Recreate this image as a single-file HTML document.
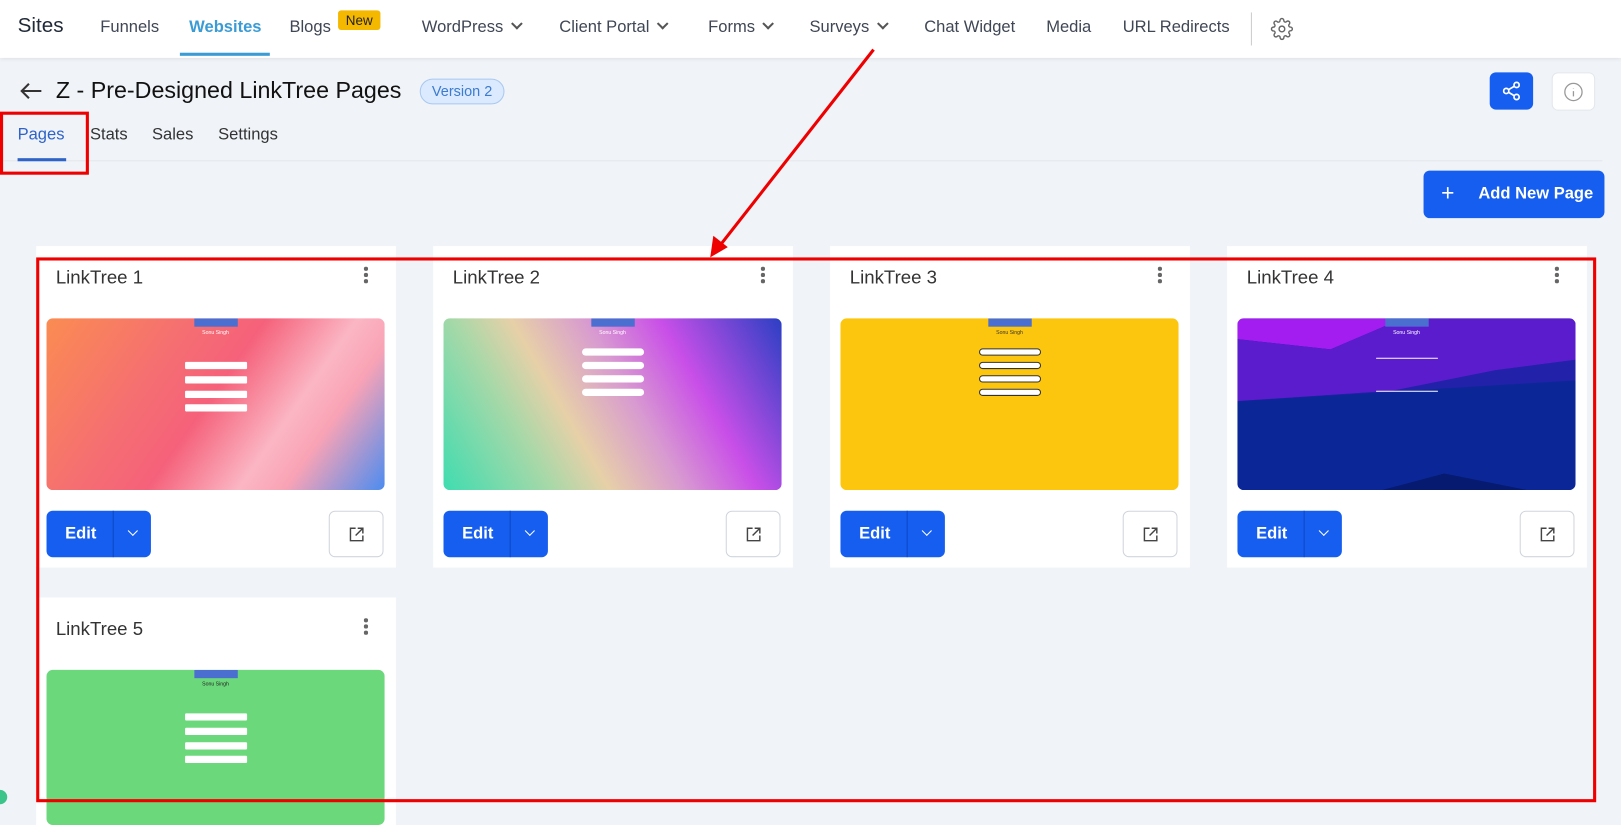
<!DOCTYPE html>
<html><head><meta charset="utf-8"><style>
*{box-sizing:border-box;margin:0;padding:0}
html,body{width:1621px;height:808px;overflow:hidden;background:#f0f4f8;font-family:"Liberation Sans",sans-serif}
#w{position:absolute;left:0;top:0;width:1568px;height:782px;transform:scale(1.0338);transform-origin:0 0}
.a{position:absolute}
.nav{left:0;top:0;width:1568px;height:56px;background:#fff;box-shadow:0 1px 4px rgba(0,0,0,.08)}
.ni{position:absolute;top:18px;font-size:16px;color:#3f4654;white-space:nowrap}
.chev{display:inline-block;width:8px;height:8px;border-right:2px solid #555;border-bottom:2px solid #555;transform:rotate(45deg);margin-left:9px;position:relative;top:-4px}
.card{position:absolute;width:348px;height:311px;background:#fff}
.card .t{position:absolute;left:19px;top:20px;font-size:18px;color:#333}
.card .k{position:absolute;left:317px;top:20px;width:4px}
.card .k i{display:block;width:3.5px;height:3.5px;border-radius:50%;background:#666;margin-bottom:2.5px}
.th{position:absolute;left:10px;top:70px;width:327px;height:166px;border-radius:6px;overflow:hidden}
.edit{position:absolute;left:10px;top:256px;width:101px;height:45px;background:#155eef;border-radius:6px;color:#fff;font-weight:bold;font-size:16px}
.edit span{position:absolute;left:18px;top:14px}
.edit b{position:absolute;left:64px;top:0;width:1px;height:45px;background:#0d47c4}
.edit em{position:absolute;left:80px;top:16px;width:7px;height:7px;border-right:1.5px solid #fff;border-bottom:1.5px solid #fff;transform:rotate(45deg)}
.ext{position:absolute;left:283px;top:256px;width:53px;height:45px;border:1px solid #d0d5dd;border-radius:6px;background:#fff}
.lg{position:absolute;left:50%;top:0;width:42px;height:8px;margin-left:-21px;background:#4a6fd0}
.nm{position:absolute;left:0;right:0;top:11px;text-align:center;font-size:5px;color:#fff}
.bt{position:absolute;left:50%;width:60px;height:7px;margin-left:-30px;background:#fff;border-radius:1px}
.bt.r{border-radius:5px}
</style></head><body><div id="w">
<div class="a nav">
<div class="ni" style="left:17px;top:14px;font-size:20px;color:#1f2937">Sites</div>
<div class="ni" style="left:97px">Funnels</div>
<div class="ni" style="left:183px;color:#3a9bd5;font-weight:bold">Websites</div>
<div class="a" style="left:174px;top:51px;width:87px;height:3px;background:#3a9bd5"></div>
<div class="ni" style="left:280px">Blogs</div>
<div class="a" style="left:327px;top:10px;width:41px;height:19px;background:#f5b800;border-radius:3px;font-size:13px;color:#222;text-align:center;line-height:19px">New</div>
<div class="ni" style="left:408px">WordPress<span class="chev"></span></div>
<div class="ni" style="left:541px">Client Portal<span class="chev"></span></div>
<div class="ni" style="left:685px">Forms<span class="chev"></span></div>
<div class="ni" style="left:783px">Surveys<span class="chev"></span></div>
<div class="ni" style="left:894px">Chat Widget</div>
<div class="ni" style="left:1012px">Media</div>
<div class="ni" style="left:1086px">URL Redirects</div>
<div class="a" style="left:1210px;top:12px;width:1px;height:32px;background:#ccc"></div>
<svg class="a" style="left:1229px;top:17px" width="22" height="22" viewBox="0 0 24 24" fill="none" stroke="#666" stroke-width="1.5"><circle cx="12" cy="12" r="3"/><path d="M19.4 15a1.65 1.65 0 0 0 .33 1.82l.06.06a2 2 0 1 1-2.830 2.83l-.06-.06a1.65 1.65 0 0 0-1.82-.33 1.65 1.65 0 0 0-1 1.51V21a2 2 0 1 1-4 0v-.09A1.65 1.65 0 0 0 9 19.4a1.650 1.65 0 0 0-1.82.33l-.06.06a2 2 0 1 1-2.83-2.83l.06-.06a1.65 1.65 0 0 0 .33-1.82 1.65 1.65 0 0 0-1.51-1H3a2 2 0 1 1 0-4h.09A1.65 1.65 0 0 0 4.6 9a1.65 1.65 0 0 0-.33-1.82l-.06-.06a2 2 0 1 1 2.83-2.83l.06.06a1.65 1.65 0 0 0 1.82.33H9a1.65 1.65 0 0 0 1-1.51V3a2 2 0 1 1 4 0v.09a1.65 1.65 0 0 0 1 1.51 1.65 1.65 0 0 0 1.82-.33l.06-.06a2 2 0 1 1 2.83 2.83l-.06.06a1.65 1.65 0 0 0-.33 1.82V9a1.65 1.65 0 0 0 1.51 1H21a2 2 0 1 1 0 4h-.09a1.65 1.65 0 0 0-1.51 1z"/></svg>
</div>
<svg class="a" style="left:18px;top:79px" width="24" height="18" viewBox="0 0 24 18" fill="none" stroke="#333" stroke-width="2"><path d="M22 9H3M10 2L3 9l7 7"/></svg>
<div class="a" style="left:54px;top:75px;font-size:22.5px;color:#111">Z - Pre-Designed LinkTree Pages</div>
<div class="a" style="left:406px;top:76px;width:82px;height:25px;background:#dbeafe;border:1px solid #a8c8f0;border-radius:13px;font-size:14px;color:#3b7bd0;text-align:center;line-height:23px">Version 2</div>
<div class="a" style="left:1441px;top:70px;width:42px;height:36px;background:#155eef;border-radius:6px"><svg style="position:absolute;left:11px;top:8px" width="20" height="20" viewBox="0 0 24 24" fill="none" stroke="#fff" stroke-width="2"><circle cx="18" cy="5" r="3"/><circle cx="6" cy="12" r="3"/><circle cx="18" cy="19" r="3"/><path d="M8.6 13.5l6.8 4M15.4 6.5l-6.8 4"/></svg></div>
<div class="a" style="left:1501px;top:70px;width:42px;height:37px;background:#fff;border:1px solid #e3e7ec;border-radius:6px"><svg style="position:absolute;left:10px;top:8px" width="20" height="20" viewBox="0 0 24 24" fill="none" stroke="#999" stroke-width="1.5"><circle cx="12" cy="12" r="10"/><path d="M12 11v6M12 7.5v.5"/></svg></div>
<div class="a" style="left:17px;top:122px;font-size:16px;color:#2f63c8">Pages</div>
<div class="a" style="left:87px;top:122px;font-size:16px;color:#333">Stats</div>
<div class="a" style="left:147px;top:122px;font-size:16px;color:#333">Sales</div>
<div class="a" style="left:211px;top:122px;font-size:16px;color:#333">Settings</div>
<div class="a" style="left:0;top:155px;width:1550px;height:1px;background:#e4e8ed"></div>
<div class="a" style="left:17px;top:153px;width:47px;height:3px;background:#2f63c8"></div>
<div class="a" style="left:0;top:108px;width:86px;height:61px;border:3px solid #e00"></div>
<div class="a" style="left:1377px;top:165px;width:175px;height:46px;background:#155eef;border-radius:6px;color:#fff"><span style="position:absolute;left:17px;top:9px;font-size:22px;font-weight:300">+</span><span style="position:absolute;left:53px;top:14px;font-size:16px;font-weight:bold">Add New Page</span></div>

<div class="card" style="left:35px;top:238px"><div class="t">LinkTree 1</div><div class="k"><i></i><i></i><i></i></div>
<div class="th" style="background:linear-gradient(125deg,#fb8c52 0%,#f57070 30%,#f5617a 48%,#fbb6c4 68%,#f9a3b5 78%,#4b8cf0 100%)"><div class="lg"></div><div class="nm">Sonu Singh</div><div class="bt" style="top:42px"></div><div class="bt" style="top:56px"></div><div class="bt" style="top:70px"></div><div class="bt" style="top:83px"></div></div>
<div class="edit"><span>Edit</span><b></b><em></em></div><div class="ext"><svg style="position:absolute;left:18px;top:14px" width="16" height="16" viewBox="0 0 16 16" fill="none" stroke="#444" stroke-width="1.4"><path d="M7 2H2v12h12V9M9 2h5v5M14 2L7 9"/></svg></div></div>

<div class="card" style="left:419px;top:238px"><div class="t">LinkTree 2</div><div class="k"><i></i><i></i><i></i></div>
<div class="th" style="background:linear-gradient(60deg,#3fdcb0 0%,#a8d8a8 25%,#e7d0a8 38%,#d89bd0 55%,#c94fe8 72%,#2b3fc4 100%)"><div class="lg"></div><div class="nm">Sonu Singh</div><div class="bt r" style="top:29px"></div><div class="bt r" style="top:42px"></div><div class="bt r" style="top:55px"></div><div class="bt r" style="top:68px"></div></div>
<div class="edit"><span>Edit</span><b></b><em></em></div><div class="ext"><svg style="position:absolute;left:18px;top:14px" width="16" height="16" viewBox="0 0 16 16" fill="none" stroke="#444" stroke-width="1.4"><path d="M7 2H2v12h12V9M9 2h5v5M14 2L7 9"/></svg></div></div>

<div class="card" style="left:803px;top:238px"><div class="t">LinkTree 3</div><div class="k"><i></i><i></i><i></i></div>
<div class="th" style="background:#fdc60e"><div class="lg"></div><div class="nm" style="color:#333">Sonu Singh</div><div class="bt r" style="top:29px;border:1px solid #333"></div><div class="bt r" style="top:42px;border:1px solid #333"></div><div class="bt r" style="top:55px;border:1px solid #333"></div><div class="bt r" style="top:68px;border:1px solid #333"></div></div>
<div class="edit"><span>Edit</span><b></b><em></em></div><div class="ext"><svg style="position:absolute;left:18px;top:14px" width="16" height="16" viewBox="0 0 16 16" fill="none" stroke="#444" stroke-width="1.4"><path d="M7 2H2v12h12V9M9 2h5v5M14 2L7 9"/></svg></div></div>

<div class="card" style="left:1187px;top:238px"><div class="t">LinkTree 4</div><div class="k"><i></i><i></i><i></i></div>
<div class="th" style="background:#0b2797"><svg style="position:absolute;left:0;top:0" width="327" height="166"><path d="M0 0H327V40L200 45 150 0Z" fill="#6a1fd6"/><path d="M0 0H160L90 30 0 20Z" fill="#a31cf0"/><path d="M0 20L90 30 160 0 327 0V40L250 50 150 70 0 80Z" fill="#5a1ccc"/><path d="M0 80L150 70 250 50 327 40V60Z" fill="#3a1cbc" opacity=".5"/><path d="M140 166L200 150 280 166Z" fill="#061a70"/></svg><div class="lg"></div><div class="nm">Sonu Singh</div><div class="bt" style="top:38px;height:1px"></div><div class="bt" style="top:70px;height:1px"></div></div>
<div class="edit"><span>Edit</span><b></b><em></em></div><div class="ext"><svg style="position:absolute;left:18px;top:14px" width="16" height="16" viewBox="0 0 16 16" fill="none" stroke="#444" stroke-width="1.4"><path d="M7 2H2v12h12V9M9 2h5v5M14 2L7 9"/></svg></div></div>

<div class="card" style="left:35px;top:578px;height:220px"><div class="t">LinkTree 5</div><div class="k"><i></i><i></i><i></i></div>
<div class="th" style="background:#6cd87c;height:150px"><div class="lg"></div><div class="nm" style="color:#222">Sonu Singh</div><div class="bt" style="top:42px"></div><div class="bt" style="top:56px"></div><div class="bt" style="top:70px"></div><div class="bt" style="top:83px"></div></div></div>

<div class="a" style="left:35px;top:249px;width:1509px;height:527px;border:3px solid #e00"></div>
<svg class="a" style="left:0;top:0" width="1568" height="782"><line x1="845" y1="48" x2="696" y2="238" stroke="#e00" stroke-width="3"/><path d="M687 249L690 228 704 239Z" fill="#e00"/></svg>
<div class="a" style="left:-7px;top:764px;width:14px;height:14px;border-radius:50%;background:#3cc48a"></div>
</div></body></html>
